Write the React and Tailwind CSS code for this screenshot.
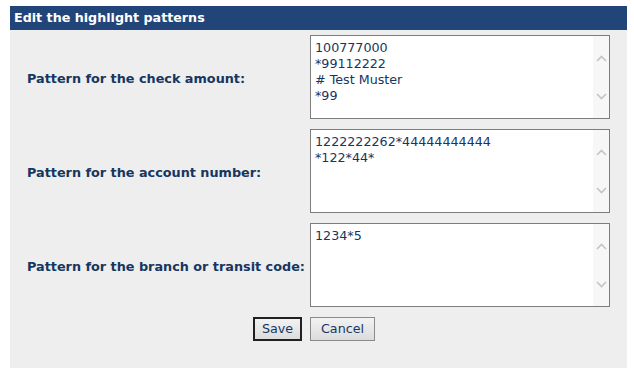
import React from "react";

const font = { fontFamily: '"DejaVu Sans", Verdana, sans-serif' };

function Chevron({ up }) {
  return (
    <svg width="11" height="7" viewBox="0 0 11 7" className="block">
      <path
        d={up ? "M1 6 L5.5 1.5 L10 6" : "M1 1 L5.5 5.5 L10 1"}
        fill="none"
        stroke="#c4c4c4"
        strokeWidth="1.6"
      />
    </svg>
  );
}

function Box({ text }) {
  return (
    <div className="flex h-[84px] w-[300px] border border-[#7d7d7d] bg-white">
      <div className="flex-1 whitespace-pre pl-1 pt-[4px] text-[12.7px] leading-[16px] text-[#17365f]">
        {text}
      </div>
      <div className="flex w-[16px] flex-col items-center bg-[#f7f7f7] pt-[19px]">
        <Chevron up />
        <div className="h-[31px]" />
        <Chevron />
      </div>
    </div>
  );
}

const rows = [
  ["Pattern for the check amount:", "100777000\n*99112222\n# Test Muster\n*99"],
  ["Pattern for the account number:", "1222222262*44444444444\n*122*44*"],
  ["Pattern for the branch or transit code:", "1234*5"],
];

export default function App() {
  return (
    <div className="min-h-[375px] bg-white pl-[10px] pt-[6px]" style={font}>
      <div className="w-[617px]">
        <div className="flex h-[24px] items-center bg-[#224579] pl-[4px] text-[12.7px] font-bold text-white">
          Edit the highlight patterns
        </div>
        <div className="grid grid-cols-[300px_300px_17px] gap-y-[10px] bg-[#eeeeee] pb-[27px] pt-[5px]">
          {rows.map(([label, text]) => (
            <React.Fragment key={label}>
              <div className="flex items-center pl-[17px] pt-[4px] text-[12.8px] font-bold text-[#17365f]">
                {label}
              </div>
              <Box text={text} />
              <div />
            </React.Fragment>
          ))}
          <div className="flex justify-end pr-[8px]">
            <button className="h-[24px] w-[49px] border-2 border-[#202020] bg-gradient-to-b from-[#f2f2f2] to-[#dcdcdc] text-[12.7px] text-[#17365f]">
              Save
            </button>
          </div>
          <div className="flex">
            <button className="h-[24px] w-[65px] border border-[#8a8a8a] bg-gradient-to-b from-[#f2f2f2] to-[#dcdcdc] text-[12.7px] text-[#17365f]">
              Cancel
            </button>
          </div>
          <div />
        </div>
      </div>
    </div>
  );
}
